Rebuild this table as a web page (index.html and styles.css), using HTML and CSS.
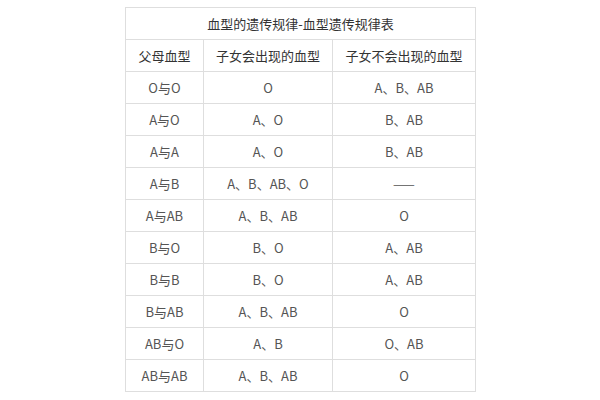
FILE: index.html
```html
<!DOCTYPE html>
<html lang="zh">
<head>
<meta charset="utf-8">
<link rel="stylesheet" href="styles.css">
</head>
<body>
<table class="blood">
<colgroup><col class="c1"><col class="c2"><col class="c3"></colgroup>
<tr class="head"><td colspan="3">血型的遗传规律-血型遗传规律表</td></tr>
<tr class="head"><td>父母血型</td><td>子女会出现的血型</td><td>子女不会出现的血型</td></tr>
<tr><td>O与O</td><td>O</td><td>A、B、AB</td></tr>
<tr><td>A与O</td><td>A、O</td><td>B、AB</td></tr>
<tr><td>A与A</td><td>A、O</td><td>B、AB</td></tr>
<tr><td>A与B</td><td>A、B、AB、O</td><td>——</td></tr>
<tr><td>A与AB</td><td>A、B、AB</td><td>O</td></tr>
<tr><td>B与O</td><td>B、O</td><td>A、AB</td></tr>
<tr><td>B与B</td><td>B、O</td><td>A、AB</td></tr>
<tr><td>B与AB</td><td>A、B、AB</td><td>O</td></tr>
<tr><td>AB与O</td><td>A、B</td><td>O、AB</td></tr>
<tr><td>AB与AB</td><td>A、B、AB</td><td>O</td></tr>
</table>
</body>
</html>
```
FILE: styles.css
```css
html, body {
  margin: 0;
  padding: 0;
  background: #fff;
}
body {
  padding-top: 7px;
  font-family: "Noto Sans CJK SC", "Liberation Sans", sans-serif;
  font-size: 13px;
}
.blood {
  margin: 0 0 0 125px;
  border-collapse: collapse;
  table-layout: fixed;
  width: 350px;
}
.c1 { width: 78px; }
.c2 { width: 129px; }
.c3 { width: 143px; }
.blood td {
  border: 1px solid #dedede;
  height: 31px;
  padding: 0;
  text-align: center;
  vertical-align: middle;
  color: #555;
  line-height: 16px;
}
.blood tr.head td {
  color: #333;
}
```
